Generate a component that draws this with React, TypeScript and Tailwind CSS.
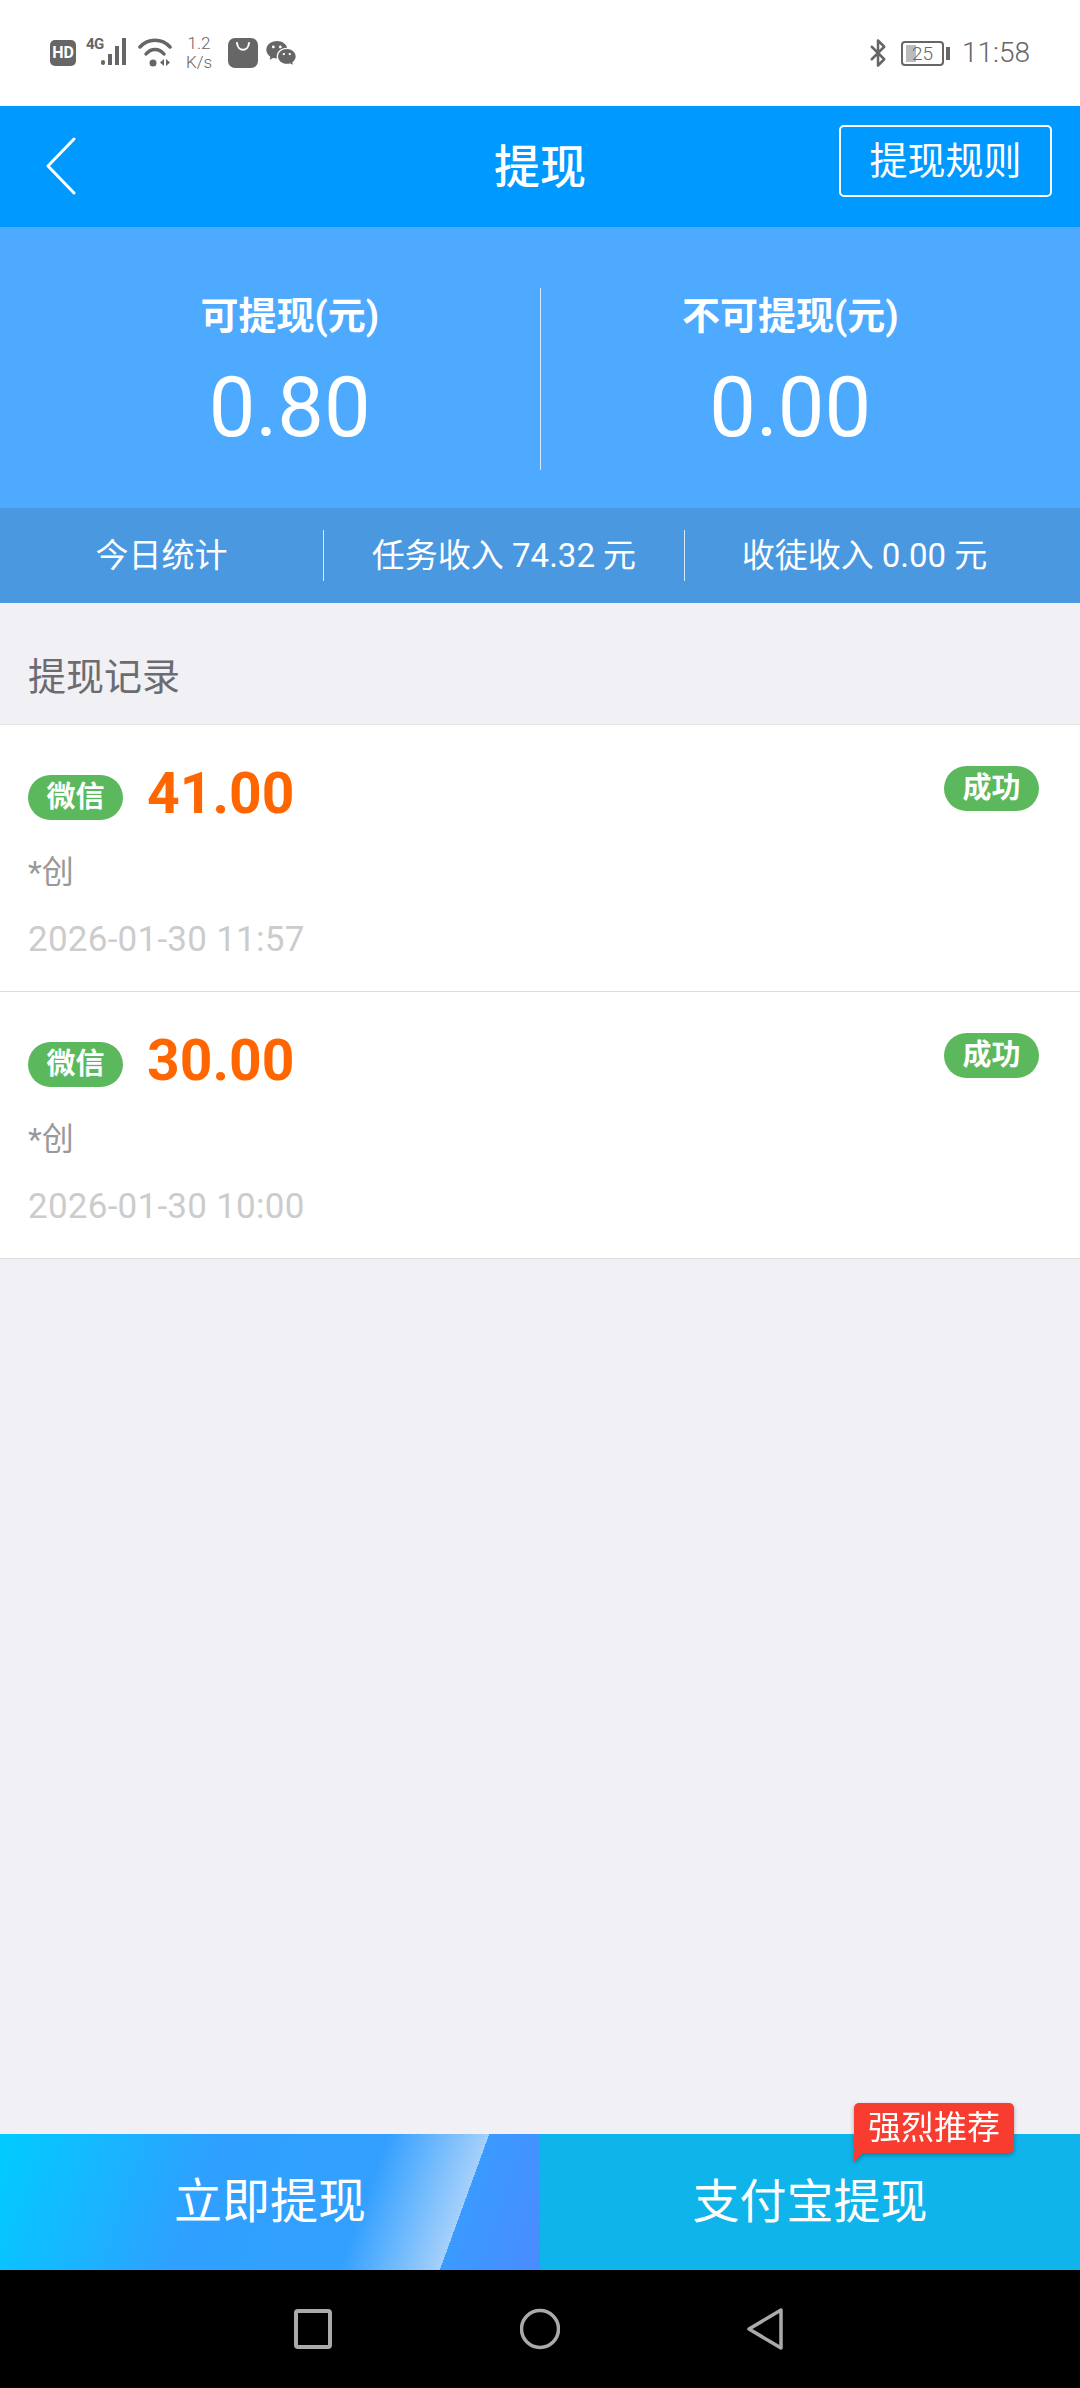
import { Bluetooth } from 'lucide-react';
import { RiWechatFill } from 'react-icons/ri';

const sans = 'font-[Roboto,"Noto_Sans_CJK_SC",sans-serif]';

const records = [
  { amount: '41.00', name: '*创', time: '2026-01-30 11:57' },
  { amount: '30.00', name: '*创', time: '2026-01-30 10:00' },
];

function StatusBar() {
  return (
    <div className="h-[106px] bg-white flex items-center justify-between pl-[50px] pr-[50px] text-[#666]">
      <div className="flex items-center">
        <div className="w-[26px] h-[26px] rounded-[5px] bg-[#666] text-white text-[16px] font-bold leading-[26px] text-center">
          HD
        </div>
        <div className="relative w-[44px] h-[28px] ml-[10px] -mt-[2px]">
          <span className="absolute left-0 -top-[3px] text-[15px] font-bold leading-[18px] tracking-[-0.5px]">4G</span>
          <svg viewBox="0 0 44 28" className="w-[44px] h-[28px]">
            <rect x="15" y="22" width="4" height="5" rx="2" fill="#666" />
            <rect x="22" y="16" width="4" height="11" fill="#666" />
            <rect x="29" y="8" width="4" height="19" fill="#666" />
            <rect x="36" y="0" width="4" height="27" fill="#666" />
          </svg>
        </div>
        <svg viewBox="0 0 34 30" className="w-[34px] h-[30px] ml-[8px]">
          <path d="M2 9C10 0 24 0 32 9" fill="none" stroke="#666" strokeWidth="3.5" strokeLinecap="round" />
          <path d="M8 16C13 10 21 10 26 16" fill="none" stroke="#666" strokeWidth="3.5" strokeLinecap="round" />
          <circle cx="15" cy="25" r="3.5" fill="#666" />
          <path d="M26 21v7l-4-3.500zM28 21v7l4-3.500z" fill="#666" />
        </svg>
        <div className="w-[30px] ml-[12px] text-center text-[17px] leading-[19px] font-light">
          <div>1.2</div>
          <div>K/s</div>
        </div>
        <svg viewBox="0 0 30 30" className="w-[30px] h-[30px] ml-[14px]">
          <rect width="30" height="30" rx="7" fill="#666" />
          <path d="M9 5c1 9 11 9 12 0" fill="none" stroke="#fff" strokeWidth="2" strokeLinecap="round" />
        </svg>
        <RiWechatFill className="w-[32px] h-[32px] ml-[7px] text-[#666]" />
      </div>
      <div className="flex items-center">
        <Bluetooth className="w-[30px] h-[32px]" strokeWidth={2} />
        <div className="flex items-center ml-[8px]">
          <div className="relative w-[43px] h-[25px] rounded-[4px] border-2 border-[#666] overflow-hidden text-center text-[19px] font-light leading-[21px]">
            <div className="absolute left-[3px] top-[2px] bottom-[2px] w-[10px] bg-[#bbb]" />
            <span className="relative">25</span>
          </div>
          <div className="w-[4px] h-[13px] ml-[2px] bg-[#666]" />
        </div>
        <span className="ml-[12px] text-[28px] font-light leading-none">11:58</span>
      </div>
    </div>
  );
}

function Header() {
  return (
    <div className="relative h-[121px] bg-[#0099ff] flex items-center justify-center text-white">
      <svg viewBox="0 0 30 58" className="absolute left-[46px] top-[31px] w-[30px] h-[58px]">
        <path d="M28 2 2 29l26 27" fill="none" stroke="#fff" strokeWidth="3" strokeLinecap="round" strokeLinejoin="round" />
      </svg>
      <h1 className="text-[46px] font-medium leading-none">提现</h1>
      <div className="absolute right-[28px] top-[19px] w-[213px] h-[72px] rounded-[5px] border-2 border-white flex items-center justify-center text-[38px] leading-none">
        提现规则
      </div>
    </div>
  );
}

function Balance({ label, value }: { label: string; value: string }) {
  return (
    <div className="w-[500px] flex flex-col items-center">
      <div className="text-[38px] font-bold leading-[42px] mt-[7px]">{label}</div>
      <div className="text-[83px] leading-[86px] mt-[28px]">{value}</div>
    </div>
  );
}

function Stats() {
  return (
    <>
      <div className="h-[281px] bg-[#4daaff] flex items-start pt-[61px] px-[40px] text-white">
        <Balance label="可提现(元)" value="0.80" />
        <div className="w-px h-[182px] bg-[#d5eaff]" />
        <Balance label="不可提现(元)" value="0.00" />
      </div>
      <div className="h-[95px] bg-[#4a98e0] flex items-center text-white text-[33px]">
        <div className="w-[323px] text-center">今日统计</div>
        <div className="w-px h-[51px] bg-[#d5eaff]" />
        <div className="w-[360px] text-center">任务收入 74.32 元</div>
        <div className="w-px h-[51px] bg-[#d5eaff]" />
        <div className="flex-1 pr-[36px] text-center">收徒收入 0.00 元</div>
      </div>
    </>
  );
}

function RecordRow({ amount, name, time }: { amount: string; name: string; time: string }) {
  return (
    <div className="h-[267px] bg-white border-b border-[#ddd] px-[28px] pt-[40px]">
      <div className="flex items-start">
        <div className="w-[95px] h-[45px] mt-[10px] rounded-full bg-[#5cb85c] text-white text-[29px] font-bold leading-[45px] text-center">
          微信
        </div>
        <div className="ml-[24px] -mt-[1px] text-[57px] font-bold leading-[60px] text-[#ff6600]">{amount}</div>
        <div className="ml-auto mr-[13px] w-[95px] h-[45px] mt-[1px] rounded-full bg-[#5cb85c] text-white text-[29px] font-bold leading-[45px] text-center">
          成功
        </div>
      </div>
      <div className="mt-[28px] text-[32px] leading-[40px] text-[#999]">{name}</div>
      <div className="mt-[28px] text-[35px] leading-[40px] tracking-[0.25px] text-[#ccc]">{time}</div>
    </div>
  );
}

function BottomBar() {
  return (
    <div className="relative h-[136px] flex text-white">
      <div className="w-[540px] flex items-center justify-center text-[48px] bg-[linear-gradient(110deg,#00ccff_0%,#2fa0ff_38%,#33a0ff_66%,#a5d0fb_83%,#3a9aff_83%,#4a8bff_100%)]">
        立即提现
      </div>
      <div className="w-[540px] flex items-center justify-center text-[47px] bg-[#0fb4ea]">支付宝提现</div>
      <div className="absolute left-[854px] -top-[31px] drop-shadow-[0_2px_2px_rgba(0,0,0,0.3)]">
        <div className="w-[160px] h-[50px] rounded-[5px] bg-[#f83c30] text-[33px] leading-[50px] text-center">强烈推荐</div>
        <div className="w-[10px] h-[10px] -mt-px bg-[#f83c30] [clip-path:polygon(0_0,100%_0,0_100%)]" />
      </div>
    </div>
  );
}

function NavBar() {
  return (
    <div className="h-[118px] bg-black flex items-center pl-[293px] gap-[187px]">
      <svg viewBox="0 0 40 44" className="w-[40px] h-[44px]">
        <rect x="3" y="4" width="34" height="36" rx="2" fill="none" stroke="#aaa" strokeWidth="4" />
      </svg>
      <svg viewBox="0 0 40 44" className="w-[40px] h-[44px]">
        <circle cx="20" cy="22" r="18.500" fill="none" stroke="#aaa" strokeWidth="3.5" />
      </svg>
      <svg viewBox="0 0 36 44" className="w-[36px] h-[44px]">
        <path d="M34 3v38L2 22z" fill="none" stroke="#aaa" strokeWidth="3.5" strokeLinejoin="round" />
      </svg>
    </div>
  );
}

export default function App() {
  return (
    <div className={`w-[1080px] h-[2388px] flex flex-col bg-[#f0f0f5] ${sans}`}>
      <StatusBar />
      <Header />
      <Stats />
      <div className="h-[122px] pl-[28px] pt-[28px] flex items-center text-[38px] text-[#6b6b70] border-b border-[#e5e5e5]">提现记录</div>
      {records.map((r) => (
        <RecordRow key={r.amount} {...r} />
      ))}
      <div className="flex-1" />
      <BottomBar />
      <NavBar />
    </div>
  );
}
